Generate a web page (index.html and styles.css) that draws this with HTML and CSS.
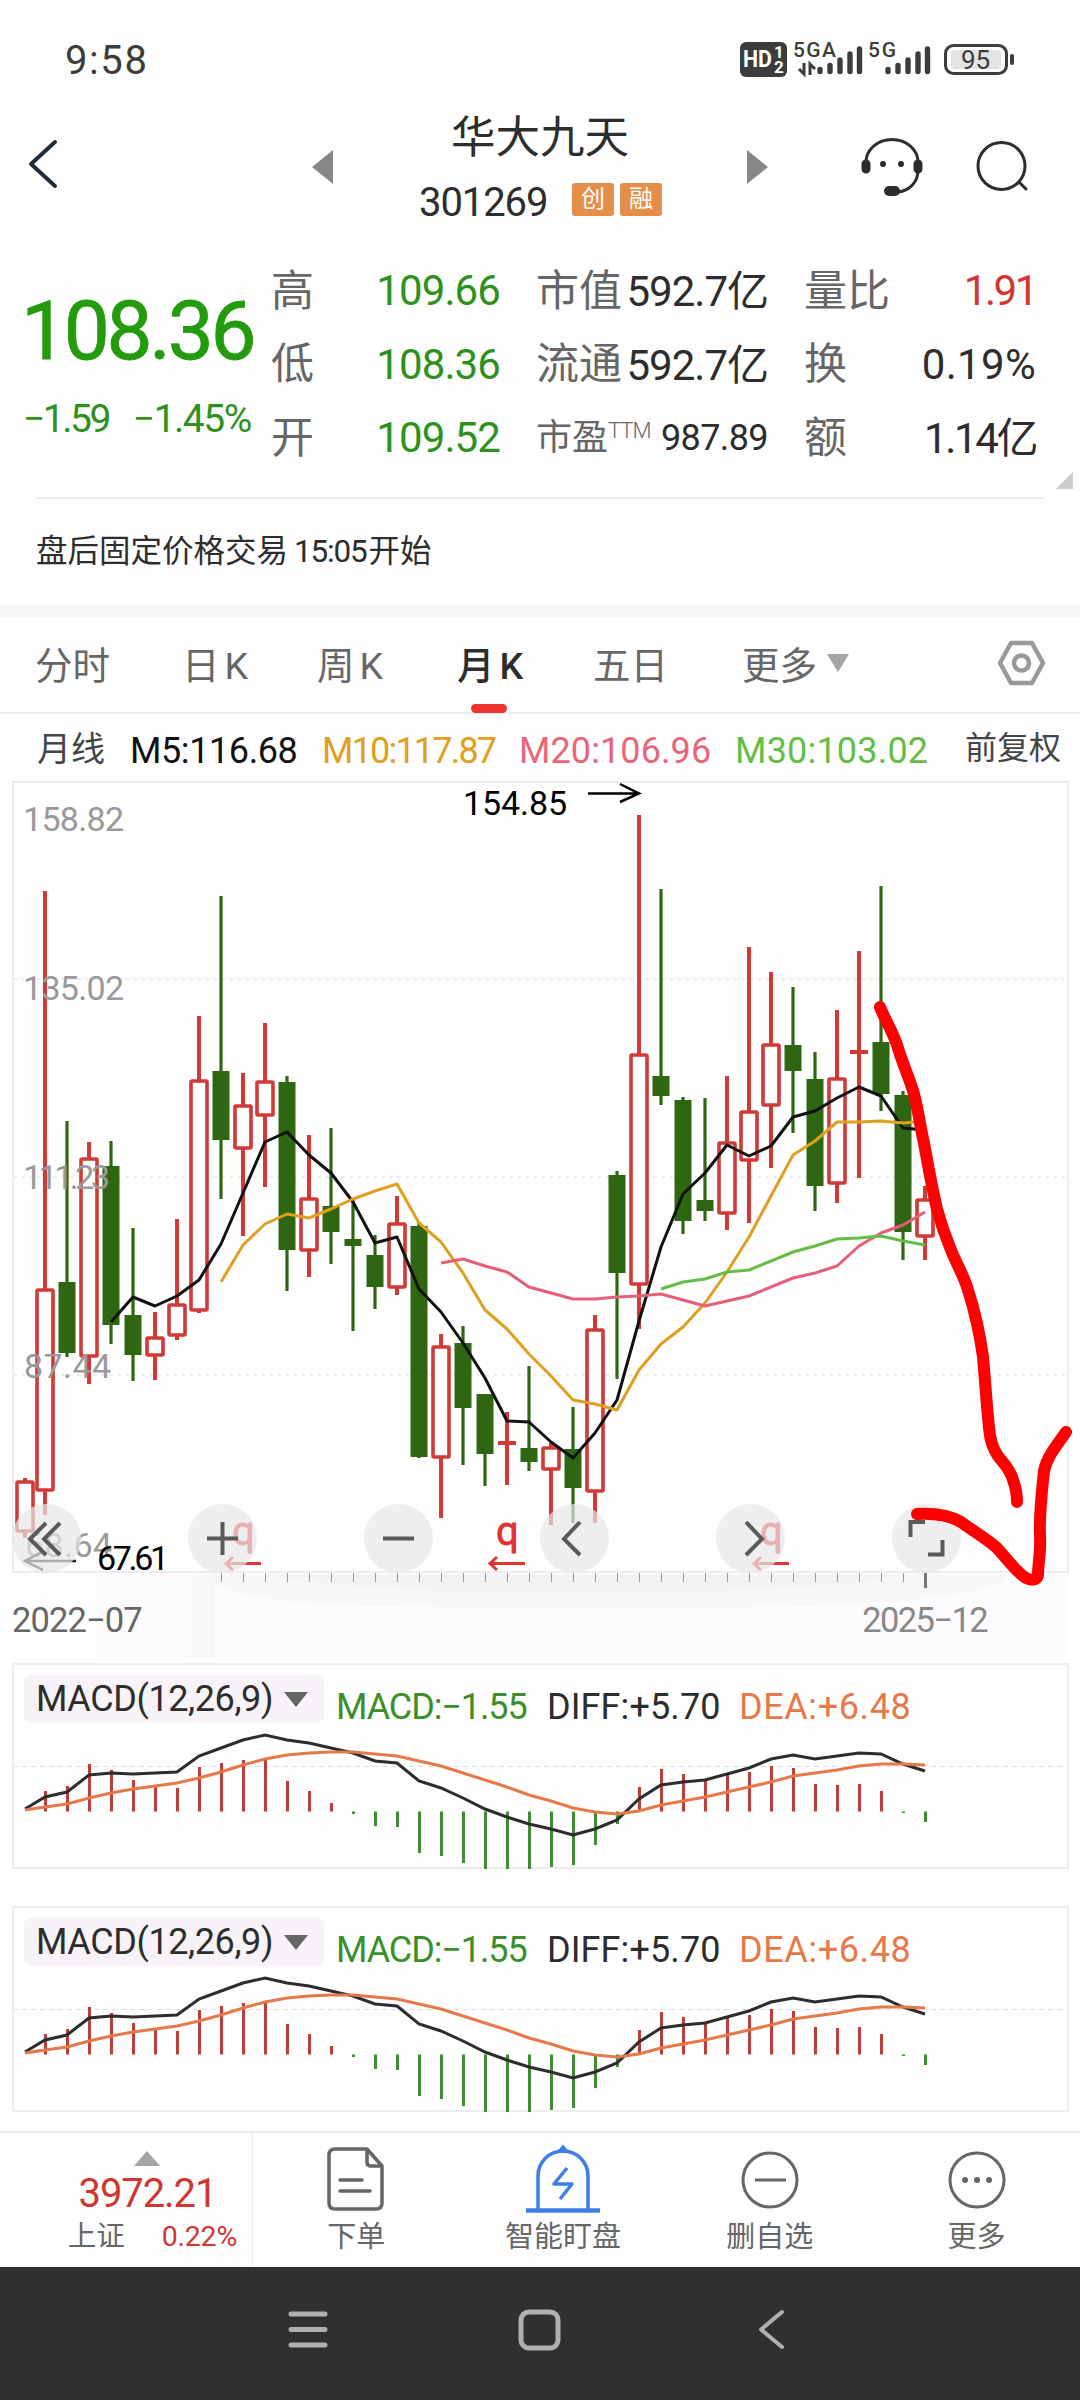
FILE: index.html
```html
<!DOCTYPE html>
<html lang="zh-CN">
<head>
    <meta charset="UTF-8">
    <meta name="viewport" content="width=device-width, initial-scale=1.0">
    <title>华大九天 301269</title>
    <link rel="stylesheet" href="styles.css">
</head>
<body>
    <div class="status-bar">
        <span class="clock">9:58</span>
        <svg class="status-icons" width="280" height="44" viewBox="736 38 280 44">
            <rect x="740" y="42" width="47" height="35" rx="6" fill="#3c3c3c"/>
            <text x="743" y="67" class="st-hd" textLength="29" lengthAdjust="spacingAndGlyphs">HD</text>
            <text x="774" y="58" class="st-num">1</text>
            <text x="774" y="73" class="st-num">2</text>
            <text x="793" y="57" class="st-net" textLength="43">5GA</text>
            <text x="868" y="57" class="st-net" textLength="28">5G</text>
            <g stroke="#3c3c3c" stroke-width="3" fill="none">
                <path d="M804 63v11l-5-5M810 75V64l5 5"/>
            </g>
            <g stroke="#3c3c3c" stroke-width="5.4" stroke-linecap="round">
                <path d="M820 69.500v2M830 65.500v6M840 60v11.500M850 54v17.500M859.500 49v22.500"/>
                <path d="M888 69.500v2M898 65.500v6M908 60v11.500M918 54v17.500M927.500 49v22.500"/>
            </g>
            <rect x="945.500" y="45.500" width="61" height="28" rx="8" fill="#fff" stroke="#3c3c3c" stroke-width="3"/>
            <rect x="951" y="50" width="50" height="19" rx="3" fill="#e3e3e3"/>
            <rect x="1010" y="54" width="4" height="11" rx="2" fill="#3c3c3c"/>
            <text x="961" y="69" class="st-bat" textLength="29">95</text>
        </svg>
    </div>

    <header class="header">
        <svg class="back" width="34" height="52" viewBox="0 0 34 52"><path d="M29 4 5 26 29 48" fill="none" stroke="#222d3a" stroke-width="4" stroke-linecap="round" stroke-linejoin="round"/></svg>
        <span class="tri-left"></span>
        <div class="stock">
            <h1>华大九天</h1>
            <div class="stock-code">
                <span class="code">301269</span>
                <span class="chip">创</span>
                <span class="chip">融</span>
            </div>
        </div>
        <span class="tri-right"></span>
        <svg class="service" width="64" height="64" viewBox="860 136 64 64" fill="none" stroke="#2d2d2d" stroke-width="3">
            <path d="M866 162a26 22.500 0 0 1 52 0v8c0 12-8 20-19 22"/>
            <rect x="863" y="161" width="6" height="11" rx="3" fill="#2d2d2d"/>
            <rect x="915" y="161" width="6" height="11" rx="3" fill="#2d2d2d"/>
            <circle cx="883" cy="164" r="3" fill="#2d2d2d" stroke="none"/>
            <circle cx="901" cy="164" r="3" fill="#2d2d2d" stroke="none"/>
            <rect x="884" y="186" width="16" height="10" rx="5" fill="#2d2d2d" stroke="none"/>
        </svg>
        <svg class="search" width="56" height="56" viewBox="974 138 56 56" fill="none" stroke="#2d2d2d" stroke-width="3" stroke-linecap="round">
            <circle cx="1001.500" cy="166" r="23.500"/>
            <path d="M1019 182l7 7"/>
        </svg>
    </header>

    <section class="quote">
        <div class="price">
            <div class="price-now">108.36</div>
            <div class="price-diff"><span>−1.59</span><span>−1.45%</span></div>
        </div>
        <div class="quote-grid">
            <span class="label">高</span><span class="value green">109.66</span>
            <span class="label">市值</span><span class="value unit">592.7亿</span>
            <span class="label">量比</span><span class="value red tight">1.91</span>
            <span class="label">低</span><span class="value green">108.36</span>
            <span class="label">流通</span><span class="value unit">592.7亿</span>
            <span class="label">换</span><span class="value wide">0.19%</span>
            <span class="label">开</span><span class="value green">109.52</span>
            <span class="label small">市盈<sup>TTM</sup></span><span class="value small">987.89</span>
            <span class="label">额</span><span class="value unit tight">1.14亿</span>
        </div>
        <span class="corner"></span>
    </section>
    <div class="notice">盘后固定价格交易<span>15:05</span>开始</div>

    <nav class="tabs">
        <span>分时</span>
        <span>日<b>K</b></span>
        <span>周<b>K</b></span>
        <span class="active">月<b>K</b></span>
        <span>五日</span>
        <span class="more">更多<i></i></span>
        <svg class="setting" width="52" height="52" viewBox="0 0 52 52" fill="none" stroke="#999" stroke-width="4.500" stroke-linejoin="round">
            <path d="M15 6h21l11 20-11 20H15L4 26z"/>
            <circle cx="25.500" cy="26" r="7.500"/>
        </svg>
    </nav>

    <div class="ma-row">
        <span class="ma-name">月线</span>
        <span class="m5">M5:116.68</span>
        <span class="m10">M10:117.87</span>
        <span class="m20">M20:106.96</span>
        <span class="m30">M30:103.02</span>
        <span class="ma-name adjust">前复权</span>
    </div>

    <section class="kline">
        <svg id="kline" width="1080" height="882" viewBox="0 781 1080 882"></svg>
        <div class="tools">
            <button><svg viewBox="0 0 69 69"><path d="M34 19 18 35 34 51M48 19 32 35 48 51"/></svg></button>
            <button><svg viewBox="0 0 69 69"><path d="M34.500 18v33M19 34.500h31"/></svg></button>
            <button><svg viewBox="0 0 69 69"><path d="M19 34.500h31"/></svg></button>
            <button><svg viewBox="0 0 69 69"><path d="M40 18 24 35 40 51"/></svg></button>
            <button><svg viewBox="0 0 69 69"><path d="M30 18 46 35 30 51"/></svg></button>
            <button><svg viewBox="0 0 69 69"><path d="M33 18H18.500V33M50.500 36V50.500H36"/></svg></button>
        </div>
        <div class="dates"><span>2022−07</span><span>2025−12</span></div>
        <svg class="pen" width="1080" height="882" viewBox="0 781 1080 882">
            <path d="M880 1007C886 1022 892 1030 897 1045C903 1065 909 1077 914 1094C919 1113 920 1127 924 1143C928 1165 932 1188 937 1209C941 1224 946 1238 951 1250C957 1265 964 1276 968 1290C974 1309 980 1335 983 1357C985 1380 987 1408 989 1428C990 1440 993 1449 998 1456C1004 1464 1010 1469 1013 1480C1016 1488 1017 1495 1017 1502"/>
            <path d="M917 1514C936 1513 949 1515 961 1522C973 1531 986 1538 997 1548C1008 1560 1017 1573 1026 1578C1032 1581 1037 1580 1038 1575C1038 1565 1041 1550 1040 1536C1039 1515 1042 1490 1044 1471C1047 1456 1058 1444 1066 1432"/>
        </svg>
    </section>

    <section class="macd">
        <div class="macd-head">
            <span class="macd-pick">MACD(12,26,9)<i></i></span>
            <span class="v-macd">MACD:−1.55</span>
            <span class="v-diff">DIFF:+5.70</span>
            <span class="v-dea">DEA:+6.48</span>
        </div>
        <svg class="macd-chart" width="1080" height="206" viewBox="0 0 1080 206"></svg>
    </section>
    <section class="macd">
        <div class="macd-head">
            <span class="macd-pick">MACD(12,26,9)<i></i></span>
            <span class="v-macd">MACD:−1.55</span>
            <span class="v-diff">DIFF:+5.70</span>
            <span class="v-dea">DEA:+6.48</span>
        </div>
        <svg class="macd-chart" width="1080" height="206" viewBox="0 0 1080 206"></svg>
    </section>

    <footer class="toolbar">
        <div class="index">
            <i></i>
            <b>3972.21</b>
            <div><span>上证</span><em>0.22%</em></div>
        </div>
        <div class="item">
            <svg width="76" height="72" viewBox="0 0 76 72" fill="none" stroke="#666" stroke-width="3.500" stroke-linejoin="round" stroke-linecap="round">
                <path d="M17 6h32l15 17v37q0 6-6 6H17q-6 0-6-6V12q0-6 6-6zM49 6v13q0 4 4 4h11M22 37h22M22 48h30"/>
            </svg>
            <span>下单</span>
        </div>
        <div class="item">
            <svg width="76" height="72" viewBox="0 0 76 72" fill="none" stroke="#3d7fe6" stroke-width="3.500">
                <path d="M13 66V33a25 25 0 0 1 50 0v33"/>
                <path d="M1 67.500h74" stroke-width="4.500"/>
                <path d="M33 9l5-6 5 6z" fill="#3d7fe6" stroke-width="2"/>
                <path d="M42 25 29 41h18L35 56" stroke-linejoin="round"/>
            </svg>
            <span>智能盯盘</span>
        </div>
        <div class="item">
            <svg width="76" height="72" viewBox="0 0 76 72" fill="none" stroke="#666" stroke-width="3">
                <circle cx="38" cy="37" r="27"/><path d="M23 37h31"/>
            </svg>
            <span>删自选</span>
        </div>
        <div class="item">
            <svg width="76" height="72" viewBox="0 0 76 72" fill="none" stroke="#666" stroke-width="3">
                <circle cx="38" cy="37" r="27"/>
                <path d="M26 37h.1M38 37h.1M50 37h.1" stroke-width="6" stroke-linecap="round"/>
            </svg>
            <span>更多</span>
        </div>
    </footer>

    <div class="sys-nav">
        <svg width="1080" height="133" viewBox="0 0 1080 133" fill="none" stroke="#b0b0b0" stroke-width="5" stroke-linecap="round" stroke-linejoin="round">
            <path d="M291 47h34M291 62.500h34M291 78h34"/>
            <rect x="521" y="45" width="37" height="36" rx="8"/>
            <path d="M782 45 761 62.500 782 80" stroke-width="4"/>
        </svg>
    </div>

    <script src="chart.js"></script>
</body>
</html>
```
FILE: styles.css
```css
* {
    margin: 0;
    padding: 0;
    box-sizing: border-box;
}

body {
    width: 1080px;
    height: 2400px;
    background: #fefefe;
    color: #2d2d2d;
    font-family: Roboto, "Noto Sans CJK SC", sans-serif;
    display: flex;
    flex-direction: column;
    overflow: hidden;
    white-space: nowrap;
}

body > * {
    flex: none;
}

svg {
    display: block;
}

i, em {
    font-style: normal;
}

/* 状态栏 */
.status-bar {
    height: 104px;
    padding: 38px 64px 0 65px;
    display: flex;
    justify-content: space-between;
}

.clock {
    font-size: 40px;
    line-height: 45px;
    letter-spacing: 1.6px;
    color: #3c3c3c;
}

.st-hd {
    font-size: 24px;
    font-weight: 700;
    fill: #fff;
}

.st-num {
    font-size: 17px;
    font-weight: 700;
    fill: #fff;
}

.st-net {
    font-size: 21px;
    font-weight: 500;
    fill: #3c3c3c;
}

.st-bat {
    font-size: 26px;
    fill: #3c3c3c;
}

/* 标题 */
.header {
    height: 136px;
    display: flex;
    align-items: flex-start;
}

.back {
    margin: 34px 0 0 26px;
}

.tri-left, .tri-right {
    margin-top: 46px;
    border: 17px solid transparent;
}

.tri-left {
    margin-left: 252px;
    border-left: 0;
    border-right: 21px solid #858885;
}

.tri-right {
    border-right: 0;
    border-left: 21px solid #858885;
}

.stock {
    width: 414px;
    text-align: center;
    padding-top: 2px;
}

.stock h1 {
    font-size: 44.5px;
    font-weight: 400;
    line-height: 64px;
    margin-bottom: 2px;
}

.stock-code {
    display: flex;
    align-items: center;
    height: 60px;
    padding-left: 86px;
}

.code {
    font-size: 40px;
    letter-spacing: -1.1px;
    width: 153px;
    text-align: left;
    line-height: 60px;
    padding-top: 2px;
}

.chip {
    width: 42px;
    height: 33px;
    margin-top: -6px;
    margin-right: 6px;
    border-radius: 3px;
    background: #e58e4a;
    color: #fff;
    font-size: 24px;
    line-height: 32px;
}

.service {
    margin: 32px 0 0 92px;
}

.search {
    margin: 34px 0 0 50px;
}

/* 行情 */
.quote {
    position: relative;
    height: 257px;
    display: flex;
}

.price {
    width: 273px;
    padding: 41px 0 0 21px;
    color: #249a0d;
}

.price-now {
    font-size: 82px;
    line-height: 100px;
    letter-spacing: -3.3px;
    -webkit-text-stroke: 0.8px #249a0d;
}

.price-diff {
    display: flex;
    gap: 24px;
    margin-top: 13px;
    padding-left: 2px;
    font-size: 39px;
    line-height: 51px;
    letter-spacing: -2.5px;
    color: #2e911c;
}

.price-diff span + span {
    letter-spacing: -1.5px;
}

.quote-grid {
    display: grid;
    grid-template-columns: 88px 141px 147px 121px 124px 144px;
    grid-template-rows: repeat(3, 73.5px);
    margin-top: 13px;
    margin-left: -2px;
    align-items: center;
}

.quote-grid .label:nth-child(6n + 3),
.quote-grid .label:nth-child(6n + 5) {
    padding-left: 36px;
}

.label {
    font-size: 43px;
    color: #666;
    margin-top: -6px;
}

.label.small {
    font-size: 36px;
}

.label sup {
    font-size: 22px;
    font-weight: 300;
    vertical-align: 12px;
    line-height: 0;
    letter-spacing: -1px;
}

.value {
    display: flex;
    justify-content: flex-end;
    font-size: 42px;
    letter-spacing: -0.9px;
    padding-top: 2px;
}

.value.small {
    font-size: 36px;
    letter-spacing: -0.6px;
}

.value.unit {
    padding-top: 0;
    margin-top: -4px;
    letter-spacing: -1px;
}

.value.tight {
    letter-spacing: -2.4px;
}

.value.wide {
    letter-spacing: 0.3px;
}

.green {
    color: #2e911c;
}

.red {
    color: #d23630;
}

.corner {
    position: absolute;
    right: 7px;
    bottom: 8px;
    border-left: 17px solid transparent;
    border-bottom: 17px solid #ccc;
}

.notice {
    height: 120px;
    border-bottom: 12px solid #f6f6f6;
    padding-left: 36px;
    font-size: 31.5px;
    line-height: 110px;
    background: linear-gradient(#eee, #eee) 36px 0 / 1009px 2px no-repeat;
}

.notice span {
    letter-spacing: -1.2px;
    margin: 0 2px 0 6px;
}

/* 周期 */
.tabs {
    height: 97px;
    border-bottom: 2px solid #ededed;
    display: grid;
    grid-template-columns: 147px 135px 140px 136px 149px 254px 52px;
    padding-left: 35px;
    padding-bottom: 4px;
    align-items: center;
    font-size: 37.5px;
    color: #666;
}

.tabs b {
    font-weight: 400;
    margin-left: 5px;
}

.tabs .active {
    position: relative;
    color: #2d2d2d;
    font-weight: 500;
}

.tabs .active b {
    font-weight: 500;
}

.tabs .active::after {
    content: "";
    position: absolute;
    left: 14px;
    bottom: -23px;
    width: 36px;
    height: 9px;
    border-radius: 5px;
    background: #ec3530;
}

.more {
    display: flex;
    align-items: center;
}

.more i {
    margin-left: 10px;
    border: 11px solid transparent;
    border-top: 18px solid #a5a5a5;
    border-bottom: 0;
}

.ma-row {
    height: 67px;
    display: grid;
    grid-template-columns: 93px 192px 197px 216px 230px 120px;
    padding-left: 37px;
    align-items: center;
    font-size: 36px;
    letter-spacing: -0.4px;
    line-height: 67px;
    padding-top: 4px;
}

.ma-name {
    font-size: 34px;
    color: #444;
    margin-top: -4px;
    letter-spacing: 0;
}

.ma-name.adjust {
    font-size: 32px;
    margin-top: -6px;
}

.m5 {
    color: #111;
}

.m10 {
    color: #df9f20;
    letter-spacing: -1.8px;
}

.m20 {
    color: #e8667a;
    letter-spacing: 0.1px;
}

.m30 {
    color: #65bd45;
    letter-spacing: 0.2px;
}

/* K线 */
.kline {
    position: relative;
    height: 882px;
}

.kline text {
    font-size: 34px;
}

.tools {
    position: absolute;
    left: 12px;
    top: 723px;
    width: 949px;
    display: flex;
    justify-content: space-between;
}

.tools button {
    width: 69px;
    height: 69px;
    border: 0;
    border-radius: 50%;
    background: rgba(231, 231, 231, 0.7);
}

.tools path {
    fill: none;
    stroke: #5a5a5a;
    stroke-width: 4;
}

.dates {
    position: absolute;
    left: 12px;
    top: 817px;
    width: 975px;
    display: flex;
    justify-content: space-between;
    font-size: 34.5px;
    line-height: 44px;
    color: #666;
    letter-spacing: -0.9px;
}

.dates span + span {
    color: #888;
    letter-spacing: -1.6px;
}

.pen {
    position: absolute;
    left: 0;
    top: 0;
}

.pen path {
    fill: none;
    stroke: #fe0000;
    stroke-width: 12;
    stroke-linecap: round;
    stroke-linejoin: round;
}

/* MACD */
.macd {
    position: relative;
    height: 206px;
    margin-bottom: 37px;
}

.macd + .toolbar {
    margin-top: -18px;
}

.macd-chart {
    position: absolute;
    left: 0;
    top: 0;
}

.macd-head {
    display: grid;
    grid-template-columns: 312px 211px 192px 200px;
    padding: 12px 0 0 24px;
    font-size: 36px;
    line-height: 48px;
}

.macd-head > span {
    padding-top: 8px;
}

.macd-head .macd-pick {
    width: 300px;
    height: 48px;
    padding: 0 0 0 12px;
    border-radius: 7px;
    background: #f7f3f8;
    display: flex;
    align-items: center;
    letter-spacing: -0.4px;
}

.macd-pick i {
    margin-left: 11px;
    border: 12px solid transparent;
    border-top: 15px solid #666;
    border-bottom: 0;
}

.v-macd {
    color: #3b8f2a;
    letter-spacing: -1.1px;
}

.v-diff {
    letter-spacing: 0.1px;
}

.v-dea {
    color: #e6794a;
    letter-spacing: 0.6px;
}

/* 底部 */
.toolbar {
    height: 136px;
    border-top: 2px solid #ececec;
    display: flex;
    color: #666;
}

.index {
    width: 253px;
    border-right: 1px solid #ececec;
    padding: 18px 0 0 43px;
    display: flex;
    flex-direction: column;
    align-items: center;
}

.index i {
    border: 13px solid transparent;
    border-bottom: 15px solid #a5a5a5;
    border-top: 0;
}

.index b {
    font-size: 40px;
    font-weight: 400;
    line-height: 55px;
    letter-spacing: -1.1px;
    color: #cf3632;
}

.index div {
    display: flex;
    gap: 37px;
    padding-left: 10px;
    font-size: 28.5px;
    line-height: 32px;
}

.index em {
    color: #cf3632;
    letter-spacing: -0.2px;
}

.item {
    width: 207px;
    display: flex;
    flex-direction: column;
    align-items: center;
    padding-top: 10px;
    font-size: 29px;
}

.item span {
    line-height: 44px;
}

.sys-nav {
    height: 133px;
    background: #303030;
}
```
FILE: chart.js
```js
const STEP = 22;
const RED = '#d23a38';
const GREEN = '#2f6612';
const cx = i => i === 0 ? 25 : 23 + STEP * i;

// [最高, 实体上沿, 实体下沿, 最低, 涨=1/跌=0]
const candles = [
    [1478, 1482, 1531, 1538, 1], [891, 1290, 1490, 1515, 1], [1121, 1282, 1353, 1357, 0],
    [1142, 1159, 1356, 1384, 1], [1141, 1166, 1325, 1344, 0], [1228, 1315, 1355, 1381, 0],
    [1312, 1338, 1355, 1380, 1], [1219, 1305, 1335, 1340, 1], [1016, 1081, 1310, 1313, 1],
    [896, 1071, 1140, 1199, 0], [1073, 1106, 1148, 1236, 1], [1023, 1082, 1115, 1187, 1],
    [1076, 1082, 1250, 1291, 0], [1135, 1199, 1250, 1277, 1], [1128, 1206, 1232, 1264, 0],
    [1200, 1239, 1246, 1331, 0], [1235, 1255, 1287, 1309, 0], [1196, 1224, 1287, 1295, 1],
    [1222, 1226, 1457, 1458, 0], [1334, 1347, 1457, 1518, 1], [1326, 1343, 1408, 1465, 0],
    [1394, 1394, 1454, 1486, 0], [1412, 1443, 1443, 1485, 1], [1366, 1448, 1462, 1471, 0],
    [1443, 1448, 1469, 1525, 1], [1407, 1449, 1488, 1523, 0], [1315, 1330, 1491, 1523, 1],
    [1171, 1175, 1273, 1379, 0], [815, 1055, 1284, 1329, 1], [889, 1076, 1096, 1105, 0],
    [1097, 1100, 1221, 1234, 0], [1098, 1200, 1211, 1221, 0], [1076, 1143, 1213, 1230, 1],
    [947, 1112, 1160, 1223, 1], [972, 1045, 1105, 1168, 1], [987, 1045, 1071, 1133, 0],
    [1052, 1079, 1186, 1211, 0], [1010, 1079, 1183, 1203, 1], [951, 1052, 1052, 1178, 1],
    [886, 1042, 1094, 1111, 0], [1091, 1095, 1232, 1260, 0], [1186, 1200, 1236, 1260, 1]
];

const lines = [
    { from: 4, color: '#111', y: [1322, 1297, 1306, 1296, 1280, 1244, 1193, 1142, 1132, 1155, 1173, 1202, 1243, 1237, 1289, 1312, 1343, 1378, 1421, 1422, 1442, 1458, 1433, 1400, 1321, 1247, 1194, 1173, 1145, 1156, 1146, 1117, 1111, 1098, 1087, 1096, 1128, 1130] },
    { from: 9, color: '#df9f20', y: [1282, 1245, 1224, 1214, 1218, 1209, 1199, 1191, 1184, 1223, 1242, 1273, 1310, 1329, 1354, 1376, 1400, 1404, 1410, 1370, 1344, 1327, 1303, 1272, 1237, 1196, 1155, 1141, 1122, 1122, 1121, 1123, 1121] },
    { from: 19, color: '#e4607a', y: [1263, 1259, 1266, 1272, 1287, 1293, 1299, 1299, 1297, 1296, 1294, 1300, 1306, 1301, 1296, 1287, 1278, 1273, 1266, 1246, 1233, 1225, 1212] },
    { from: 29, color: '#65bd45', y: [1289, 1282, 1279, 1272, 1270, 1261, 1252, 1246, 1239, 1238, 1236, 1241, 1245] }
];

const points = (ys, from) => ys.map((y, i) => cx(from + i) + ',' + y).join(' ');
const label = (text, x, y, w, color) =>
    `<text x="${x}" y="${y}" textLength="${w}" fill="${color}">${text}</text>`;

function drawKline() {
    // 时间轴背景
    let s = `<rect x="95" y="1574" width="973" height="83" fill="#fdfbfe"/>
        <rect x="191" y="1574" width="16" height="83" fill="#f8f8f8"/><rect x="210" y="1574" width="5" height="83" fill="#f8f8f8"/>
        <path d="M200 1574H1010C1000 1590 930 1604 800 1606C650 1610 450 1608 340 1605C250 1600 220 1592 200 1574z" fill="#f7f7f7"/>
        <path d="M270 1574H900C850 1590 700 1592 560 1592C420 1592 320 1586 270 1574z" fill="#f6f3f7"/>`;
    s += '<rect x="13" y="782" width="1055" height="790" fill="none" stroke="#ededed" stroke-width="2"/>';
    [979, 1177, 1375].forEach(y => {
        s += `<path d="M13 ${y}H1068" stroke="#e9e9e9" stroke-width="1.500" stroke-dasharray="4 4"/>`;
    });

    candles.forEach(([high, top, bottom, low, up], i) => {
        const x = cx(i);
        if (up) {
            s += `<path d="M${x} ${high}V${top}M${x} ${bottom}V${low}" stroke="${RED}" stroke-width="4"/>`;
            s += top === bottom
                ? `<path d="M${x - 9} ${top}h18" stroke="${RED}" stroke-width="4"/>`
                : `<rect x="${x - 8}" y="${top}" width="16" height="${bottom - top}" rx="1" fill="#fefefe" stroke="${RED}" stroke-width="3.600"/>`;
        } else {
            s += `<path d="M${x} ${high}V${low}" stroke="${GREEN}" stroke-width="3.200"/>`;
            s += `<rect x="${x - 8.5}" y="${top}" width="17" height="${bottom - top}" fill="${GREEN}"/>`;
        }
    });

    lines.forEach(l => {
        s += `<polyline points="${points(l.y, l.from)}" fill="none" stroke="${l.color}" stroke-width="3" stroke-linejoin="round"/>`;
    });

    s += label('158.82', 23, 831, 101, '#999') + label('135.02', 23, 1000, 101, '#999')
        + label('111.23', 23, 1189, 87, '#999') + label('87.44', 24, 1378, 87, '#999')
        + label('68.64', 25, 1557, 87, '#999');
    s += label('154.85', 463, 815, 104, '#000') + label('67.61', 97, 1570, 72, '#000');
    s += '<path d="M588 793.500H639M620 784 639 793.500 620 802" fill="none" stroke="#000" stroke-width="2.500"/>';
    s += '<path d="M76 1561H25M42 1552 25 1561 43 1570" fill="none" stroke="#222" stroke-width="2.500"/>';

    // 除权标记
    [243, 507, 771].forEach(x => {
        s += `<text x="${x - 11}" y="1545" style="font-size:40px" fill="#e03432" stroke="#e03432" stroke-width=".8">q</text>
            <path d="M${x + 18} 1563.500H${x - 16}M${x - 10} 1557 ${x - 17} 1563.500 ${x - 10} 1570" fill="none" stroke="#e03432" stroke-width="3"/>`;
    });

    for (let i = 9; i < 41; i++) {
        s += `<path d="M${cx(i) + .5} 1573v9" stroke="#999"/>`;
    }
    s += '<path d="M925.500 1573v15" stroke="#777" stroke-width="3"/>';
    document.getElementById('kline').innerHTML = s;
}

const ZERO = 148.5;
const bars = [0, 128, 123, 101, 107, 117, 124, 125, 104, 100, 97, 97, 118, 128, 140, 151, 163, 164, 190, 193, 200, 206, 206, 206, 204, 202, 182, 161, 124, 106, 111, 118, 112, 109, 103, 105, 121, 122, 121, 128, 150, 159];
const diff = [146, 134, 129, 112, 110, 111, 110, 109, 93, 85, 77, 72, 77, 80, 85, 90, 98, 100, 118, 125, 135, 146, 154, 161, 166, 172, 166, 157, 136, 122, 119, 117, 111, 105, 96, 92, 96, 93, 90, 91, 101, 108];
const dea = [147, 144, 141, 135, 130, 126, 123, 120, 115, 109, 102, 96, 92, 90, 89, 89, 91, 93, 98, 103, 110, 117, 124, 132, 138, 145, 149, 151, 148, 142, 138, 134, 129, 124, 119, 113, 110, 107, 103, 101, 101, 102];

function drawMacd(svg) {
    let s = '<rect x="13" y="1" width="1055" height="204" fill="none" stroke="#ededed" stroke-width="2"/>';
    s += '<path d="M13 103.500H1068" stroke="#dedede" stroke-width="1" stroke-dasharray="5 4"/>';
    bars.forEach((y, i) => {
        if (!y) return;
        s += `<path d="M${cx(i) + .5} ${ZERO}V${y}" stroke="${y < ZERO ? '#bd3d3b' : '#3f8d30'}" stroke-width="3"/>`;
    });
    s += `<polyline points="${points(diff, 0)}" fill="none" stroke="#2d2d2d" stroke-width="3"/>`;
    s += `<polyline points="${points(dea, 0)}" fill="none" stroke="#e6794a" stroke-width="3"/>`;
    svg.innerHTML = s;
}

drawKline();
document.querySelectorAll('.macd-chart').forEach(drawMacd);
```
